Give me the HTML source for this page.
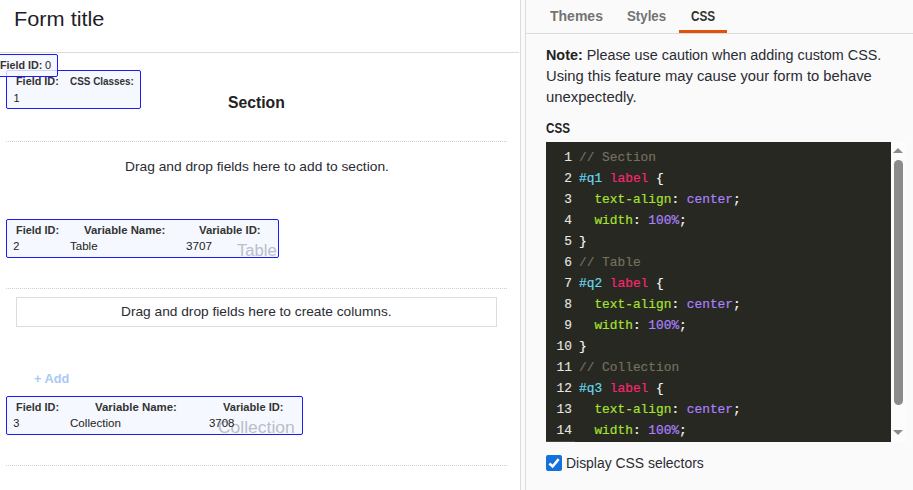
<!DOCTYPE html>
<html lang="en">
<head>
<meta charset="utf-8">
<title>Form CSS</title>
<style>
*{box-sizing:border-box;margin:0;padding:0}
html,body{width:913px;height:490px;overflow:hidden;background:#fff}
body{position:relative;font-family:"Liberation Sans",sans-serif;color:#2b2b33;font-size:14px}
.abs{position:absolute;white-space:nowrap}
.t{position:absolute;white-space:nowrap;line-height:1;transform-origin:0 0}
/* left */
#left{position:absolute;left:0;top:0;width:519px;height:490px;background:#fff;overflow:hidden}
#hline{position:absolute;left:0;top:52px;width:519px;height:1px;background:#dcdcdc}
.dot{position:absolute;left:6px;width:501px;height:0;border-top:1px dotted #cfcfcf}
.sel{position:absolute;border:1px solid #1c1cf0;border-radius:2px;background:#f5f8fe;font-size:11px;color:#333}
.sel b{transform-origin:0 0;position:absolute;white-space:nowrap;font-weight:700;line-height:1;color:#333}
.sel i{transform-origin:0 0;position:absolute;white-space:nowrap;font-style:normal;line-height:1;color:#222}
.ghost{transform-origin:0 0;position:absolute;white-space:nowrap;line-height:1;font-size:16px;color:#babecb}
/* right */
#v1{position:absolute;left:520px;top:0;width:1px;height:490px;background:#dcdcdc}
#strip{position:absolute;left:521px;top:0;width:4px;height:490px;background:#fafafa}
#v2{position:absolute;left:525px;top:0;width:1px;height:490px;background:#dcdcdc}
#right{position:absolute;left:526px;top:0;width:387px;height:490px;background:#fafafa}
#tabline{position:absolute;left:0;top:33px;width:387px;height:1px;background:#dcdcdc}
#orange{position:absolute;left:153px;top:30px;width:48px;height:3px;background:#e0530f}
.tab{transform-origin:0 0;position:absolute;top:9px;font-size:14px;font-weight:700;color:#737373;line-height:1;white-space:nowrap}
#editor{position:absolute;left:20px;top:142px;width:345px;height:300px;background:#272822;overflow:hidden}
.ln{position:absolute;left:0;width:26px;text-align:right;font-family:"Liberation Mono",monospace;font-size:12.83px;color:#e6e6e0;line-height:21px;height:21px;margin-top:1px;-webkit-text-stroke:0.12px}
.cl{margin-top:1px;-webkit-text-stroke:0.18px;position:absolute;left:33px;font-family:"Liberation Mono",monospace;font-size:12.83px;line-height:21px;height:21px;white-space:pre;color:#f8f8f2}
.c{color:#75715e}.id{color:#66d9ef}.tg{color:#f92672}.pr{color:#a6e22e}.vl{color:#ae81ff}
#sb{position:absolute;left:365px;top:142px;width:15px;height:300px;background:#fcfcfc}
#thumb{position:absolute;left:3px;top:18px;width:9px;height:245px;border-radius:5px;background:#8b8b8b}
.arr{position:absolute;left:2px;width:0;height:0;border-left:5px solid transparent;border-right:5px solid transparent}
#cb{position:absolute;left:20px;top:455px;width:16px;height:16px;border-radius:2px;background:#1470dc}
/*AUTO*/
#ftitle{transform:scaleX(1.0849);margin-left:0.21px}
#s0a{transform:scaleX(0.9770);margin-left:-1.23px}
#s0b{transform:scaleX(0.9919);margin-left:0.20px}
#s1a{transform:scaleX(0.9850);margin-left:-0.60px}
#s1b{transform:scaleX(0.9011);margin-left:0.00px}
#section{transform:scaleX(0.9826);margin-left:0.30px}
#drag1{transform:scaleX(1.0583);margin-left:-0.00px}
#s2a{transform:scaleX(0.9913);margin-left:-0.59px}
#s2b{transform:scaleX(1.0315);margin-left:0.20px}
#s2c{transform:scaleX(1.0288);margin-left:0.20px}
#s2e{transform:scaleX(1.0484);margin-left:0.00px}
#s2f{transform:scaleX(1.0627);margin-left:-0.40px}
#drag2{transform:scaleX(1.0549);margin-left:-1.00px}
#add{transform:scaleX(0.9785);margin-left:-0.48px}
#s3a{transform:scaleX(0.9915);margin-left:-0.53px}
#s3b{transform:scaleX(1.0381);margin-left:-0.06px}
#s3c{transform:scaleX(1.0093);margin-left:0.00px}
#s3e{transform:scaleX(1.0538);margin-left:-0.24px}
#s3f{transform:scaleX(1.0387);margin-left:-0.69px}
#tab1{transform:scaleX(1.0004);margin-left:0.00px}
#tab2{transform:scaleX(0.9488);margin-left:0.30px}
#tab3{transform:scaleX(0.8401);margin-left:0.00px}
#n1{transform:scaleX(1.0258);margin-left:0.30px}
#n2{transform:scaleX(1.0544);margin-left:0.30px}
#n3{transform:scaleX(1.0629);margin-left:0.30px}
#csslab{transform:scaleX(0.8300);margin-left:0.13px}
#disp{transform:scaleX(0.9945);margin-left:-0.60px}
#g2{transform:scaleX(1.0400);margin-left:0.50px}
#g3{transform:scaleX(1.0920);margin-left:-0.80px}
/*END*/
</style>
</head>
<body>
<div id="left">
  <div class="t" id="ftitle" style="left:14px;top:9px;font-size:20px;color:#1e1e2a">Form title</div>
  <div id="hline"></div>

  <div class="sel" style="left:6px;top:70px;width:135px;height:39px">
    <b id="s1a" style="left:10px;top:5px">Field ID:</b>
    <b id="s1b" style="left:63px;top:5px">CSS Classes:</b>
    <i id="s1c" style="left:6.6px;top:22px">1</i>
  </div>
  <div class="sel" style="left:-6px;top:54px;width:64px;height:23px;background:rgba(245,248,254,0.82)">
    <b id="s0a" style="left:6px;top:5px">Field ID:</b>
    <i id="s0b" style="left:50px;top:5px">0</i>
  </div>

  <div class="t" id="section" style="left:228px;top:95px;font-size:16px;font-weight:700;color:#222">Section</div>
  <div class="dot" style="top:141px"></div>
  <div class="t" id="drag1" style="left:125px;top:160px;font-size:13px;color:#2b2b33">Drag and drop fields here to add to section.</div>

  <div class="abs" style="left:7px;top:220px;width:271px;height:37px;background:#f5f8fe"></div>
  <div class="ghost" id="g2" style="left:236px;top:243px">Table</div>
  <div class="sel" style="left:6px;top:219px;width:273px;height:39px;background:rgba(245,248,254,0.0)">
    <b id="s2a" style="left:10px;top:5px">Field ID:</b>
    <b id="s2b" style="left:77px;top:5px">Variable Name:</b>
    <b id="s2c" style="left:192px;top:5px">Variable ID:</b>
    <i id="s2d" style="left:6.3px;top:21px">2</i>
    <i id="s2e" style="left:63px;top:21px">Table</i>
    <i id="s2f" style="left:179px;top:21px">3707</i>
  </div>

  <div class="dot" style="top:288px"></div>
  <div class="abs" style="left:16px;top:297px;width:481px;height:30px;border:1px solid #dcdcdc;background:#fff"></div>
  <div class="t" id="drag2" style="left:122px;top:305px;font-size:13px;color:#2b2b33">Drag and drop fields here to create columns.</div>

  <div class="t" id="add" style="left:34px;top:372px;font-size:13px;font-weight:700;color:#a9c9f1">+ Add</div>

  <div class="abs" style="left:7px;top:397px;width:295px;height:37px;background:#f5f8fe"></div>
  <div class="ghost" id="g3" style="left:219px;top:420px">Collection</div>
  <div class="sel" style="left:6px;top:396px;width:297px;height:39px;background:rgba(245,248,254,0.0)">
    <b id="s3a" style="left:10px;top:5px">Field ID:</b>
    <b id="s3b" style="left:88px;top:5px">Variable Name:</b>
    <b id="s3c" style="left:216px;top:5px">Variable ID:</b>
    <i id="s3d" style="left:6.3px;top:21px">3</i>
    <i id="s3e" style="left:63px;top:21px">Collection</i>
    <i id="s3f" style="left:203px;top:21px">3708</i>
  </div>
  <div class="dot" style="top:465px"></div>
</div>
<div id="v1"></div><div id="strip"></div><div id="v2"></div>
<div id="right">
  <div class="tab" id="tab1" style="left:24px">Themes</div>
  <div class="tab" id="tab2" style="left:101px">Styles</div>
  <div class="tab" id="tab3" style="left:165px;color:#333">CSS</div>
  <div id="tabline"></div>
  <div id="orange"></div>

  <div class="t" id="n1" style="left:20px;top:48px;font-size:14px;color:#2b2b33"><b style="color:#222">Note:</b> Please use caution when adding custom CSS.</div>
  <div class="t" id="n2" style="left:20px;top:69px;font-size:14px;color:#2b2b33">Using this feature may cause your form to behave</div>
  <div class="t" id="n3" style="left:20px;top:90px;font-size:14px;color:#2b2b33">unexpectedly.</div>
  <div class="t" id="csslab" style="left:20px;top:121px;font-size:14px;font-weight:700;color:#222">CSS</div>

  <div id="editor">
    <div style="position:absolute;left:0;top:299px;width:29px;height:1px;background:#45463f"></div>
    <div class="ln" style="top:4px">1</div><div class="cl" style="top:4px"><span class="c">// Section</span></div>
    <div class="ln" style="top:25px">2</div><div class="cl" style="top:25px"><span class="id">#q1</span> <span class="tg">label</span> {</div>
    <div class="ln" style="top:46px">3</div><div class="cl" style="top:46px">  <span class="pr">text-align</span>: <span class="vl">center</span>;</div>
    <div class="ln" style="top:67px">4</div><div class="cl" style="top:67px">  <span class="pr">width</span>: <span class="vl">100%</span>;</div>
    <div class="ln" style="top:88px">5</div><div class="cl" style="top:88px">}</div>
    <div class="ln" style="top:109px">6</div><div class="cl" style="top:109px"><span class="c">// Table</span></div>
    <div class="ln" style="top:130px">7</div><div class="cl" style="top:130px"><span class="id">#q2</span> <span class="tg">label</span> {</div>
    <div class="ln" style="top:151px">8</div><div class="cl" style="top:151px">  <span class="pr">text-align</span>: <span class="vl">center</span>;</div>
    <div class="ln" style="top:172px">9</div><div class="cl" style="top:172px">  <span class="pr">width</span>: <span class="vl">100%</span>;</div>
    <div class="ln" style="top:193px">10</div><div class="cl" style="top:193px">}</div>
    <div class="ln" style="top:214px">11</div><div class="cl" style="top:214px"><span class="c">// Collection</span></div>
    <div class="ln" style="top:235px">12</div><div class="cl" style="top:235px"><span class="id">#q3</span> <span class="tg">label</span> {</div>
    <div class="ln" style="top:256px">13</div><div class="cl" style="top:256px">  <span class="pr">text-align</span>: <span class="vl">center</span>;</div>
    <div class="ln" style="top:277px">14</div><div class="cl" style="top:277px">  <span class="pr">width</span>: <span class="vl">100%</span>;</div>
  </div>
  <div id="sb">
    <div class="arr" style="top:6px;border-bottom:5px solid #8b8b8b"></div>
    <div id="thumb"></div>
    <div class="arr" style="top:288px;border-top:5px solid #8b8b8b"></div>
  </div>

  <div id="cb"><svg width="16" height="16" viewBox="0 0 16 16"><path d="M3.4 8.5 L6.6 11.5 L12.7 4.1" fill="none" stroke="#fff" stroke-width="2.5" stroke-linecap="butt" stroke-linejoin="miter"/></svg></div>
  <div class="t" id="disp" style="left:41px;top:456px;font-size:14px;color:#2b2b33">Display CSS selectors</div>
</div>
</body>
</html>
